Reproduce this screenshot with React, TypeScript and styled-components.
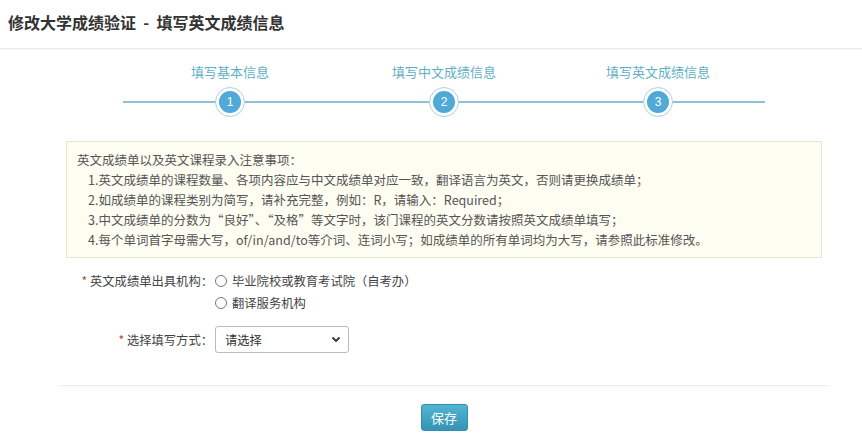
import React from 'react';
import styled, { createGlobalStyle } from 'styled-components';

const GlobalStyle = createGlobalStyle`
    body {
        margin: 0;
        background: #fff;
        font-family: "Microsoft YaHei", "Noto Sans CJK SC", "Liberation Sans", sans-serif;
        color: #555;
    }
`

type StepType = {
    num: number
    label: string
}

const steps: StepType[] = [
    { num: 1, label: '填写基本信息' },
    { num: 2, label: '填写中文成绩信息' },
    { num: 3, label: '填写英文成绩信息' },
]

const notes = [
    '1.英文成绩单的课程数量、各项内容应与中文成绩单对应一致，翻译语言为英文，否则请更换成绩单；',
    '2.如成绩单的课程类别为简写，请补充完整，例如：R，请输入：Required；',
    '3.中文成绩单的分数为“良好”、“及格”等文字时，该门课程的英文分数请按照英文成绩单填写；',
    '4.每个单词首字母需大写，of/in/and/to等介词、连词小写；如成绩单的所有单词均为大写，请参照此标准修改。',
]

export default function App() {
    return (
        <>
            <GlobalStyle />
            <Header>
                <Title>修改大学成绩验证 &nbsp;-&nbsp; 填写英文成绩信息</Title>
            </Header>
            <Content>
                <Steps>
                    {steps.map(s => (
                        <Step key={s.num}>
                            <StepLabel>{s.label}</StepLabel>
                            <StepCircle><span>{s.num}</span></StepCircle>
                        </Step>
                    ))}
                </Steps>

                <Notice>
                    <NoticeTitle>英文成绩单以及英文课程录入注意事项：</NoticeTitle>
                    {notes.map(n => <NoticeLine key={n}>{n}</NoticeLine>)}
                </Notice>

                <Form>
                    <Label><Star>*</Star> 英文成绩单出具机构：</Label>
                    <Radios>
                        <RadioRow><Radio /> 毕业院校或教育考试院（自考办）</RadioRow>
                        <RadioRow><Radio /> 翻译服务机构</RadioRow>
                    </Radios>
                    <Label $top={12}><Star>*</Star> 选择填写方式：</Label>
                    <SelectWrap>
                        <Select>
                            <span>请选择</span>
                            <svg width="10" height="7" viewBox="0 0 10 7">
                                <path d="M1.5 1.5 L5 5 L8.5 1.5" fill="none" stroke="#333" strokeWidth="1.8" />
                            </svg>
                        </Select>
                    </SelectWrap>
                </Form>

                <Divider />
                <Actions>
                    <SaveButton>保存</SaveButton>
                </Actions>
            </Content>
        </>
    );
}

const Header = styled.div`
    height: 48px;
    border-bottom: 1px solid #ebebeb;
    box-shadow: 0 1px 2px rgba(0,0,0,0.04);
    display: flex;
    align-items: center;
    padding-left: 8px;
`

const Title = styled.h1`
    margin: 0 0 4px;
    font-size: 16px;
    font-weight: bold;
    color: #333;
`

const Content = styled.div`
    width: 768px;
    margin-left: 60px;
`

const Steps = styled.div`
    margin: 14px 0 0 63px;
    width: 642px;
    display: grid;
    grid-template-columns: repeat(3, 1fr);
    position: relative;
    &::before {
        content: '';
        position: absolute;
        left: 0;
        right: 0;
        top: 38px;
        height: 2px;
        background: #8ec2d2;
    }
`

const Step = styled.div`
    display: flex;
    flex-direction: column;
    align-items: center;
    position: relative;
`

const StepLabel = styled.div`
    font-size: 13px;
    line-height: 18px;
    color: #5fb0c4;
`

const StepCircle = styled.div`
    margin-top: 6px;
    width: 28px;
    height: 28px;
    border-radius: 50%;
    background: #fff;
    border: 1px solid #a9d3e3;
    display: flex;
    align-items: center;
    justify-content: center;
    span {
        width: 22px;
        height: 22px;
        border-radius: 50%;
        background: #51a9d7;
        color: #fff;
        font-size: 12px;
        line-height: 22px;
        text-align: center;
        font-family: "Liberation Sans", sans-serif;
    }
`

const Notice = styled.div`
    margin: 24px 6px 0;
    padding: 8px 10px 7px;
    background: #fdfdf1;
    border: 1px solid #e6e6d6;
    font-size: 12.5px;
    line-height: 20px;
    color: #555;
`

const NoticeTitle = styled.div``

const NoticeLine = styled.div`
    padding-left: 11px;
`

const Form = styled.div`
    margin-top: 12px;
    display: grid;
    grid-template-columns: 153px 1fr;
    column-gap: 2px;
    font-size: 12.3px;
    color: #444;
`

const Label = styled.div<{ $top?: number }>`
    text-align: right;
    line-height: 22px;
    margin-top: ${p => p.$top ?? 0}px;
    padding-top: ${p => (p.$top ? 3 : 0)}px;
`

const Star = styled.span`
    color: #c0392b;
`

const Radios = styled.div`
    display: flex;
    flex-direction: column;
`

const RadioRow = styled.div`
    display: flex;
    align-items: center;
    gap: 5px;
    line-height: 22px;
`

const Radio = styled.span`
    width: 10px;
    height: 10px;
    border: 1px solid #777;
    border-radius: 50%;
    display: inline-block;
`

const SelectWrap = styled.div`
    margin-top: 12px;
`

const Select = styled.div`
    box-sizing: border-box;
    width: 134px;
    height: 27px;
    border: 1px solid #bbb;
    border-radius: 3px;
    padding: 0 7px 0 9px;
    display: flex;
    align-items: center;
    justify-content: space-between;
    color: #333;
`

const Divider = styled.div`
    margin-top: 32px;
    height: 1px;
    background: #ececec;
    box-shadow: 0 1px 2px rgba(0,0,0,0.04);
`

const Actions = styled.div`
    display: flex;
    justify-content: center;
    margin-top: 18px;
`

const SaveButton = styled.button`
    width: 47px;
    height: 27px;
    border: 1px solid #2f8fae;
    border-radius: 3px;
    background: linear-gradient(#53b3d2, #3594b5);
    color: #fff;
    font-size: 13px;
    font-family: inherit;
    padding: 0;
`
